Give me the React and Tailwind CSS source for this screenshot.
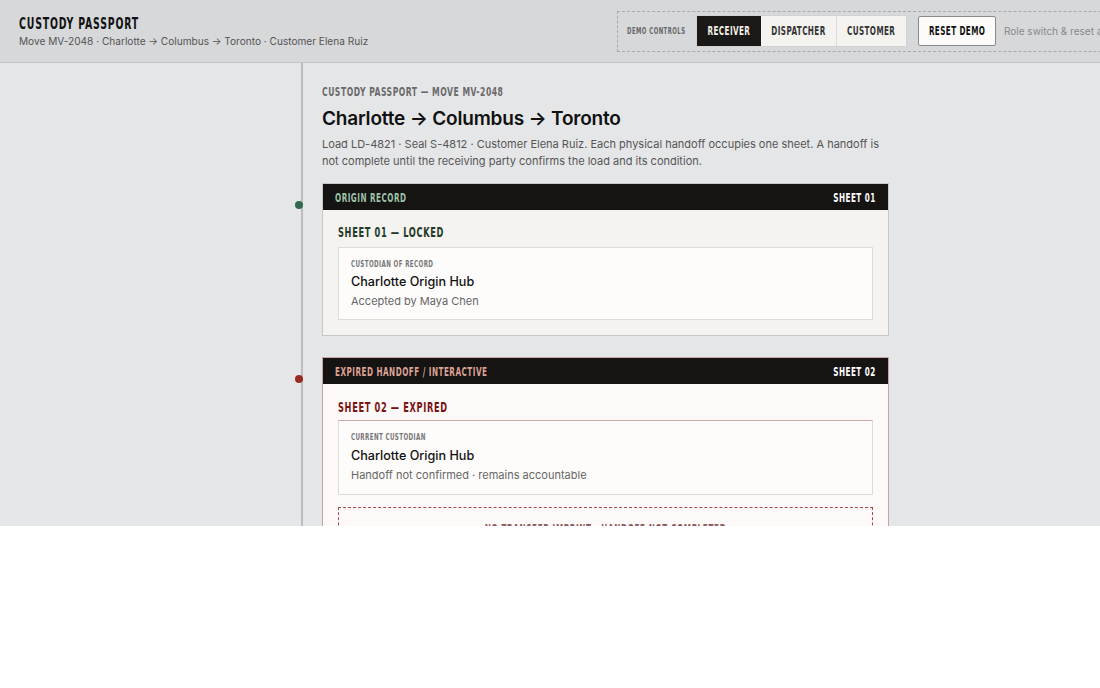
import React from 'react';

const cond =
  "font-['Liberation_Sans_Narrow','DejaVu_Sans',sans-serif] font-stretch-condensed font-bold uppercase";

// narrow display label; squeezed horizontally to get the tall poster look
const Cond = ({ children, className = '', origin = 'origin-left', scale = 'scale-x-[0.7]' }) => (
  <span className={`inline-block whitespace-nowrap ${scale} ${origin} ${cond} ${className}`}>{children}</span>
);

const RoleButton = ({ children, active, className = '' }) => (
  <button
    className={`flex h-[30px] items-center justify-center overflow-visible ${
      active ? 'bg-[#1a1918] text-[#f4efe4]' : 'bg-[#f5f3f0] text-[#333]'
    } ${className}`}
  >
    <Cond origin="origin-center" scale="scale-x-[0.67]" className="text-[12px] tracking-[0.05em]">
      {children}
    </Cond>
  </button>
);

const Header = () => (
  <header className="flex h-[63px] shrink-0 items-center overflow-hidden border-b border-[#c3c4c6] bg-[#d7d8da] pl-[19px]">
    <div className="w-[598px] shrink-0">
      <h1 className="flex h-[20px] items-center text-[#111]">
        <Cond scale="scale-x-[0.65]" className="text-[16px] leading-[20px] tracking-[0.08em]">
          Custody Passport
        </Cond>
      </h1>
      <p className="text-[10.1px] leading-[14px] text-[#555]">
        Move MV-2048 · Charlotte → Columbus → Toronto · Customer Elena Ruiz
      </p>
    </div>
    <div className="flex h-[41px] shrink-0 items-center border border-dashed border-[#a9aaac] pl-[9px] pr-[40px]">
      <div className="flex w-[58px] items-center text-[#666]">
        <Cond className="text-[8.5px] leading-[10px] tracking-[0.08em]">Demo controls</Cond>
      </div>
      <div className="ml-[11px] flex border border-[#d2d2d2]">
        <RoleButton active className="w-[64px]">
          Receiver
        </RoleButton>
        <RoleButton className="w-[76px] border-r border-[#dcdcdc]">Dispatcher</RoleButton>
        <RoleButton className="w-[69px]">Customer</RoleButton>
      </div>
      <button className="ml-[11px] flex h-[30px] w-[78px] items-center justify-center rounded-[2px] border border-[#8a8a8a] bg-[#fcfbfa] text-[#111]">
        <Cond origin="origin-center" scale="scale-x-[0.67]" className="text-[12px] tracking-[0.05em]">
          Reset demo
        </Cond>
      </button>
      <span className="ml-[8px] whitespace-nowrap text-[10px] text-[#888]">Role switch &amp; reset are demo-only</span>
    </div>
  </header>
);

const SheetHeader = ({ label, sheet, tone }) => (
  <div className="flex h-[26px] items-center justify-between bg-[#151413] px-[12px] pt-[1px]">
    <Cond className={`text-[11.5px] leading-[14px] tracking-[0.06em] ${tone}`}>{label}</Cond>
    <Cond origin="origin-right" className="text-[11.5px] leading-[14px] tracking-[0.06em] text-white">
      {sheet}
    </Cond>
  </div>
);

const Custodian = ({ label, name, note, border, nameGap, pb }) => (
  <div className={`border bg-[#fdfcfb] px-[12px] pt-[11px] ${pb} ${border}`}>
    <div className="flex h-[10px] items-center text-[#777]">
      <Cond scale="scale-x-[0.73]" className="text-[8.5px] leading-[10px] tracking-[0.06em]">
        {label}
      </Cond>
    </div>
    <div className={`${nameGap} text-[12.6px] font-medium leading-[16px] text-[#111]`}>{name}</div>
    <div className="mt-[4px] text-[11px] leading-[14px] text-[#666]">{note}</div>
  </div>
);

export default function App() {
  return (
    <div className="flex h-[526px] flex-col overflow-hidden bg-[#e5e6e8] font-['Inter',sans-serif]">
      <Header />
      <main className="flex pl-[301px]">
        <div className="relative w-[588px] border-l-2 border-[#bcbdbf] pl-[19px] pt-[22px]">
          <div className="flex h-[14px] items-center text-[#6a6a6a]">
            <Cond scale="scale-x-[0.71]" className="text-[12px] leading-[14px] tracking-[0.06em]">
              Custody passport — move MV-2048
            </Cond>
          </div>
          <h2 className="mt-[8px] text-[19px] font-semibold leading-[24px] tracking-[-0.01em] text-[#111]">
            Charlotte → Columbus → Toronto
          </h2>
          <p className="mt-[5px] w-[560px] text-[11px] leading-[17px] text-[#555]">
            Load LD-4821 · Seal S-4812 · Customer Elena Ruiz. Each physical handoff occupies one sheet. A handoff is
            not complete until the receiving party confirms the load and its condition.
          </p>

          {/* sheet 01 */}
          <section className="relative mt-[13px] border border-[#c7c7c7] bg-[#f5f3f0]">
            <span className="absolute left-[-28px] top-[17px] h-[8px] w-[8px] rounded-full bg-[#2e6b4c]" />
            <SheetHeader label="Origin record" sheet="Sheet 01" tone="text-[#9cc2a8]" />
            <div className="px-[15px] pb-[15px] pt-[13px]">
              <div className="flex h-[18px] items-center text-[#1f3a2a]">
                <Cond scale="scale-x-[0.68]" className="text-[13.5px] leading-[18px] tracking-[0.07em]">
                  Sheet 01 — Locked
                </Cond>
              </div>
              <div className="mt-[6px]">
                <Custodian
                  label="Custodian of record"
                  name="Charlotte Origin Hub"
                  note="Accepted by Maya Chen"
                  border="border-[#dedcda]"
                  nameGap="mt-[5px]"
                  pb="pb-[11px]"
                />
              </div>
            </div>
          </section>

          {/* sheet 02 */}
          <section className="relative mt-[21px] border border-[#c9a4a4] bg-[#fcf9f8]">
            <span className="absolute left-[-28px] top-[17px] h-[8px] w-[8px] rounded-full bg-[#9a2a22]" />
            <SheetHeader label="Expired handoff / interactive" sheet="Sheet 02" tone="text-[#dca394]" />
            <div className="px-[15px] pb-[15px] pt-[14px]">
              <div className="flex h-[18px] items-center text-[#7a1414]">
                <Cond scale="scale-x-[0.68]" className="text-[13.5px] leading-[18px] tracking-[0.07em]">
                  Sheet 02 — Expired
                </Cond>
              </div>
              <div className="mt-[4px]">
                <Custodian
                  label="Current custodian"
                  name="Charlotte Origin Hub"
                  note="Handoff not confirmed · remains accountable"
                  border="border-[#dedcda] border-t-[#cfa8a8]"
                  nameGap="mt-[6px]"
                  pb="pb-[12px]"
                />
              </div>
              <div className="mt-[12px] flex h-[44px] items-center justify-center border border-dashed border-[#9e4a4a] text-[#8a5a5a]">
                <Cond origin="origin-center" className="text-[11.5px] leading-[14px] tracking-[0.08em]">
                  No transfer imprint · handoff not completed
                </Cond>
              </div>
            </div>
          </section>
        </div>
      </main>
    </div>
  );
}
